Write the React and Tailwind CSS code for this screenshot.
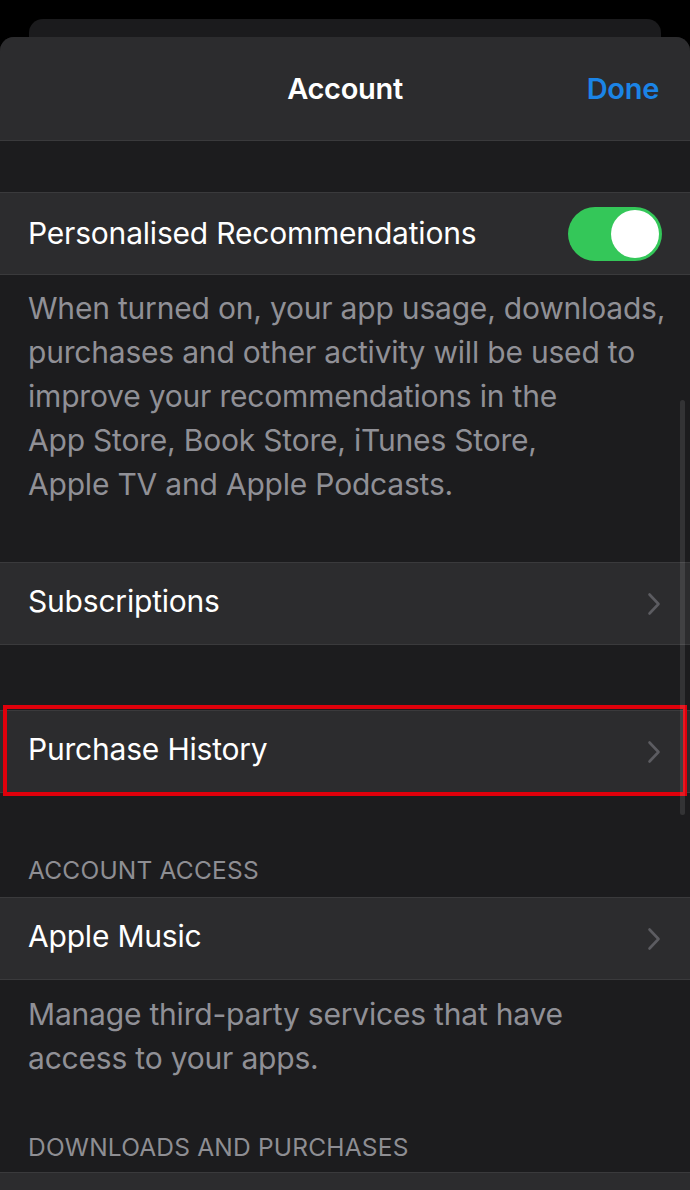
const font = { fontFamily: "Inter, 'Noto Sans', sans-serif" };

function Chevron() {
  return (
    <svg width="14" height="24" viewBox="0 0 14 24" fill="none" stroke="#5c5c61" strokeWidth="2.6" strokeLinecap="round" strokeLinejoin="round">
      <path d="M2.5 2.5 L11.5 12 L2.5 21.5" />
    </svg>
  );
}

function Row({ label, chevron = true, children }) {
  return (
    <div className="h-[83px] flex items-center justify-between pl-[28px] pr-[29px] bg-[#2c2c2e] border-y border-[#3a3a3c]">
      <span className={chevron ? 'mb-[5px] text-[30px] text-white tracking-[-0.2px]' : 'text-[30px] text-white tracking-[-0.2px]'}>{label}</span>
      {chevron && <Chevron />}
      {children}
    </div>
  );
}

function Toggle() {
  return (
    <div className="w-[94px] h-[54px] rounded-full bg-[#34c759] flex items-center justify-end pr-[3px] -mr-[1px]">
      <div className="w-[48px] h-[48px] rounded-full bg-white" />
    </div>
  );
}

export default function App() {
  return (
    <div className="h-[1190px] bg-black flex flex-col overflow-hidden" style={font}>
      {/* card behind */}
      <div className="mx-[29px] mt-[19px] h-[18px] rounded-t-[14px] bg-[#1b1b1d]" />

      <div className="relative flex-1 rounded-t-[14px] bg-[#1c1c1e] overflow-hidden">
        {/* nav bar */}
        <div className="h-[104px] grid grid-cols-[1fr_auto_1fr] items-center bg-[#2c2c2e] border-b border-[#3a3a3c]">
          <div />
          <span className="text-[29px] font-semibold text-white tracking-[-0.3px]">Account</span>
          <span className="justify-self-end pr-[31px] text-[29px] font-semibold text-[#1b84e6] tracking-[-0.3px]">Done</span>
        </div>

        <div className="h-[51px]" />

        <Row label="Personalised Recommendations" chevron={false}>
          <Toggle />
        </Row>

        <p className="pl-[28px] pt-[11px] pb-[56px] text-[30px] leading-[44px] text-[#909096] tracking-[-0.2px] whitespace-nowrap">
          When turned on, your app usage, downloads,<br />
          purchases and other activity will be used to<br />
          improve your recommendations in the<br />
          App Store, Book Store, iTunes Store,<br />
          Apple TV and Apple Podcasts.
        </p>

        <Row label="Subscriptions" />

        <div className="h-[65px]" />

        <div className="relative">
          <Row label="Purchase History" />
          <div className="absolute left-[3px] right-[3px] -top-[5px] -bottom-[3px] border-[4px] border-[#e0000b]" />
        </div>

        <div className="pl-[28px] pt-[62px] pb-[12px] text-[24.5px] leading-[30px] text-[#8e8e93] uppercase tracking-[0.2px]">
          Account Access
        </div>

        <Row label="Apple Music" />

        <p className="pl-[28px] pt-[12px] pb-[52px] text-[30px] leading-[44px] text-[#909096] tracking-[-0.2px]">
          Manage third-party services that have<br />
          access to your apps.
        </p>

        <div className="pl-[28px] pb-[10px] text-[24.5px] leading-[30px] text-[#8e8e93] uppercase tracking-[0.2px]">
          Downloads and Purchases
        </div>

        <div className="h-[83px] bg-[#2c2c2e] border-t border-[#3a3a3c]" />

        {/* scroll indicator */}
        <div className="absolute right-[5px] top-[363px] w-[5px] h-[415px] rounded-full bg-white/10" />
      </div>
    </div>
  );
}
